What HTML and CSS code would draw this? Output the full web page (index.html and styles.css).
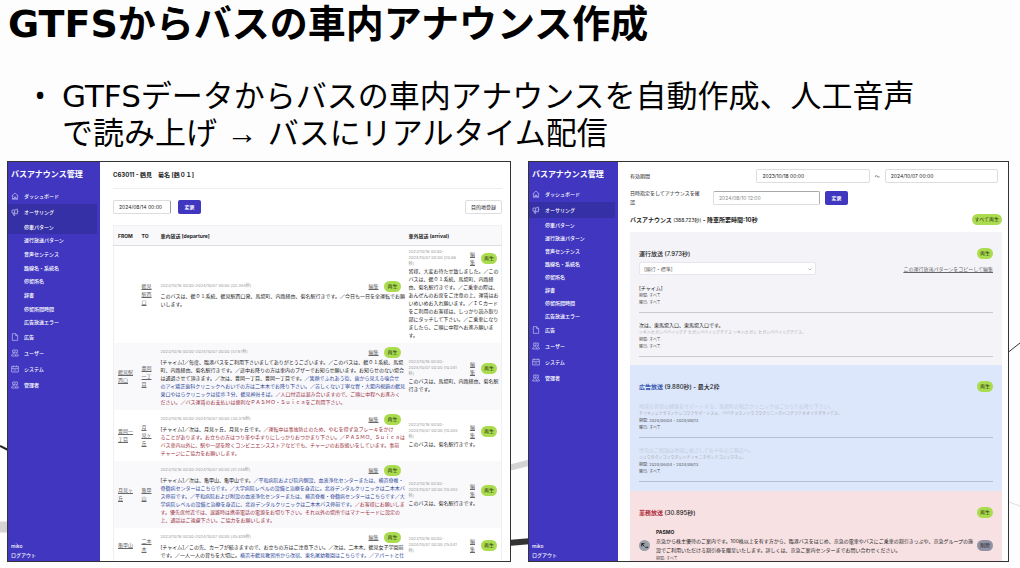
FILE: index.html
```html
<!DOCTYPE html>
<html lang="ja">
<head>
	<meta charset="utf-8">
	<title>GTFSからバスの車内アナウンス作成</title>
	<link rel="stylesheet" href="styles.css">
</head>
<body>
<svg class="defs" width="0" height="0" aria-hidden="true">
	<symbol id="home" viewBox="0 0 24 24"><path d="M2 12 12 3l10 9M5 10v11h5v-6h4v6h5V10M3 21h18"/></symbol>
	<symbol id="horn" viewBox="0 0 24 24"><path d="M3 6h8l8-3v15l-8-3H3zM11 6v9M6 15l2 7h4l-2-7M19 8c3 0 3 5 0 5"/></symbol>
	<symbol id="file" viewBox="0 0 24 24"><path d="M4 2h10l6 6v14H4zM14 2v6h6"/></symbol>
	<symbol id="users" viewBox="0 0 24 24"><path d="M5 3h7v8H5zM13 3h6v8h-5M2 21c0-9 13-9 13 0zM15 14c5 0 7 3 7 7h-7"/></symbol>
	<symbol id="system" viewBox="0 0 24 24"><path d="M2 4h20v17H2zM2 10h20M7 2v4M17 2v4M7 15h9"/></symbol>
</svg>
<svg class="lines" viewBox="0 0 1020 568" preserveAspectRatio="none" aria-hidden="true">
	<path d="M0 446 10 451" stroke="#222" stroke-width="2"/>
	<path d="M0 527H10" stroke="#d4d4d4" stroke-width="11"/>
	<path d="M508 468 532 462" stroke="#d4d4d4" stroke-width="6"/>
	<path d="M508 543 532 541" stroke="#333" stroke-width="6"/>
	<path d="M1006 354 1020 343" stroke="#333" stroke-width="1"/>
	<path d="M1006 501 1020 506" stroke="#ddd" stroke-width="1"/>
</svg>

<h1>GTFSからバスの車内アナウンス作成</h1>
<ul class="lead">
	<li>GTFSデータからバスの車内アナウンスを自動作成、人工音声<br>で読み上げ <span class="arrow">→</span> バスにリアルタイム配信</li>
</ul>

<main class="shots">
<section class="shot shot-a">
	<nav class="side">
		<h2>バスアナウンス管理</h2>
		<a href="#"><svg><use href="#home"/></svg>ダッシュボード</a>
		<a href="#" class="on"><svg><use href="#horn"/></svg>オーサリング</a>
		<div class="sub">
			<a href="#" class="on">停車パターン</a>
			<a href="#">運行放送パターン</a>
			<a href="#">音声センテンス</a>
			<a href="#">路線名・系統名</a>
			<a href="#">停留所名</a>
			<a href="#">辞書</a>
			<a href="#">停留所間時間</a>
			<a href="#">広告放送エラー</a>
		</div>
		<a href="#"><svg><use href="#file"/></svg>広告</a>
		<a href="#"><svg><use href="#users"/></svg>ユーザー</a>
		<a href="#"><svg><use href="#system"/></svg>システム</a>
		<a href="#"><svg><use href="#users"/></svg>管理者</a>
		<div class="account"><span>miko</span><a href="#">ログアウト</a></div>
	</nav>
	<div class="content">
		<h3>C63011 - 鶴見　菊名 [鶴０１]</h3>
		<form class="bar">
			<input type="text" class="date" value="2024/08/14 00:00" aria-label="日時">
			<button type="button" class="primary">変更</button>
			<button type="button" class="plain">目的地登録</button>
		</form>
		<table>
			<colgroup><col class="c-from"><col class="c-to"><col><col class="c-arr"></colgroup>
			<thead>
				<tr><th>FROM</th><th>TO</th><th>車内放送 [departure]</th><th>車外放送 (arrival)</th></tr>
			</thead>
			<tbody>
				<tr>
					<td></td>
					<td><a href="#">鶴見<br>駅西<br>口</a></td>
					<td>
						<div class="meta"><span>2023/10/18 00:00-2024/10/07 00:00 (02.364秒)</span><a href="#">編集</a><button class="play">再生</button></div>
						<p>このバスは、鶴０１系統、鶴見駅西口発、馬場町、内路経由、菊名駅行きです。／今日も一日を全運転でお願<br>いします。</p>
					</td>
					<td>
						<div class="meta"><span>2023/10/18 00:00-<br>2024/10/07 00:00 (20.88<br>秒)</span><a href="#">編<br>集</a><button class="play">再生</button></div>
						<p>皆様、大変お待たせ致しました。／この<br>バスは、鶴０１系統、馬場町、内路経<br>由、菊名駅行きです。／ご乗車の際は、<br>あんぜんのお席をご注意の上、運賃はお<br>いめいめお入れ願います。／ＩＣカード<br>をご利用のお客様は、しっかり読み取り<br>部にタッチして下さい。／ご乗車になり<br>ましたら、ご順に中程へお進み願いま<br>す。</p>
					</td>
				</tr>
				<tr>
					<td><a href="#">鶴見駅<br>西口</a></td>
					<td><a href="#">豊岡<br>一丁<br>目</a></td>
					<td>
						<div class="meta"><span>2023/10/18 00:00-2024/10/07 00:00 (57.97秒)</span><a href="#">編集</a><button class="play">再生</button></div>
						<p>[チャイム]／毎度、臨港バスをご利用下さいましてありがとうございます。／このバスは、鶴０１系統、馬場<br>町、内路経由、菊名駅行きです。／途中お降りの方は車内のブザーでお知らせ願います。お知らせのない場合<br>は通過させて頂きます。／次は、豊岡一丁目、豊岡一丁目です。<span class="ad">／笑顔でふれあう街、歯から見える噛合せ<br>のアイ矯正歯科クリニックへおいでの方は二本木でお降り下さい。／苦しくない丁寧な胃・大腸内視鏡の鶴見<br>東口やはらクリニックは徒歩３分、鶴見神社そば。</span><span class="biz">／人口付近は混み合いますので、ご順に中程へお進みく<br>ださい。／バス運賃のお支払いは便利なＰＡＳＭＯ・Ｓｕｉｃａをご利用下さい。</span></p>
					</td>
					<td>
						<div class="meta"><span>2023/10/18 00:00-<br>2024/10/07 00:00 (10.041<br>秒)</span><a href="#">編<br>集</a><button class="play">再生</button></div>
						<p>このバスは、馬場町、内路経由、菊名駅<br>行きです。</p>
					</td>
				</tr>
				<tr>
					<td><a href="#">豊岡一<br>丁目</a></td>
					<td><a href="#">月<br>見ヶ<br>丘</a></td>
					<td>
						<div class="meta"><span>2023/10/18 00:00-2024/10/07 00:00 (30.379秒)</span><a href="#">編集</a><button class="play">再生</button></div>
						<p>[チャイム]／次は、月見ヶ丘、月見ヶ丘です。<span class="biz">／運転中は事故防止のため、やむを得ず急ブレーキをかけ<br>ることがあります。お立ちの方はつり革や手すりにしっかりおつかまり下さい。／ＰＡＳＭＯ、Ｓｕｉｃａは<br>バス車内以外に、駅や一部を除くコンビニエンスストアなどでも、チャージのお取扱いをしています。事前<br>チャージにご協力をお願いします。</span></p>
					</td>
					<td>
						<div class="meta"><span>2023/10/18 00:00-<br>2024/10/07 00:00 (10.062<br>秒)</span><a href="#">編<br>集</a><button class="play">再生</button></div>
						<p>このバスは、菊名駅行きです。</p>
					</td>
				</tr>
				<tr>
					<td><a href="#">月見ヶ<br>丘</a></td>
					<td><a href="#">亀甲<br>山</a></td>
					<td>
						<div class="meta"><span>2023/10/18 00:00-2024/10/07 00:00 (51.248秒)</span><a href="#">編集</a><button class="play">再生</button></div>
						<p>[チャイム]／次は、亀甲山、亀甲山です。<span class="ad">／平和病院および院内側設、血液浄化センターまたは、横浜脊椎・<br>骨髄病センターはこちらです。／大学病院レベルの設備と治療を身近に。北谷デンタルクリニックは二本木バ<br>ス停前です。／平和病院および附設の血液浄化センターまたは、横浜脊椎・脊髄病センターはこちらです／大<br>学病院レベルの設備と治療を身近に、北谷デンタルクリニックは二本木バス停前です。</span><span class="biz">／お客様にお願いしま<br>す。優先席付近では、混雑時は携帯電話の電源をお切り下さい。それ以外の場所ではマナーモードに設定の<br>上、通話はご遠慮下さい。ご協力をお願いします。</span></p>
					</td>
					<td>
						<div class="meta"><span>2023/10/18 00:00-<br>2024/10/07 00:00 (10.062<br>秒)</span><a href="#">編<br>集</a><button class="play">再生</button></div>
						<p>このバスは、菊名駅行きです。</p>
					</td>
				</tr>
				<tr>
					<td><a href="#">亀甲山</a></td>
					<td><a href="#">二本<br>木</a></td>
					<td>
						<div class="meta"><span>2023/10/18 00:00-2024/10/07 00:00 (45.829秒)</span><a href="#">編集</a><button class="play">再生</button></div>
						<p>[チャイム]／この先、カーブが続きますので、お立ちの方はご注意下さい。／次は、二本木、鶴見女子学園前<br>です。／一人一人の育ちを大切に。<span class="ad">横浜市鶴見教習所から改宿、東名尾幼稚園はこちらです。／アパートと仕</span></p>
					</td>
					<td>
						<div class="meta"><span>2023/10/18 00:00-<br>2024/10/07 00:00 (15.041<br>秒)</span><a href="#">編<br>集</a><button class="play">再生</button></div>
					</td>
				</tr>
			</tbody>
		</table>
	</div>
</section>

<section class="shot shot-b">
	<nav class="side">
		<h2>バスアナウンス管理</h2>
		<a href="#"><svg><use href="#home"/></svg>ダッシュボード</a>
		<a href="#" class="on"><svg><use href="#horn"/></svg>オーサリング</a>
		<div class="sub">
			<a href="#">停車パターン</a>
			<a href="#">運行放送パターン</a>
			<a href="#">音声センテンス</a>
			<a href="#">路線名・系統名</a>
			<a href="#">停留所名</a>
			<a href="#">辞書</a>
			<a href="#">停留所間時間</a>
			<a href="#">広告放送エラー</a>
		</div>
		<a href="#"><svg><use href="#file"/></svg>広告</a>
		<a href="#"><svg><use href="#users"/></svg>ユーザー</a>
		<a href="#"><svg><use href="#system"/></svg>システム</a>
		<a href="#"><svg><use href="#users"/></svg>管理者</a>
		<div class="account"><span>miko</span><a href="#">ログアウト</a></div>
	</nav>
	<div class="content">
		<form>
			<div class="period">
				<label for="from">有効期間</label>
				<input type="text" id="from" value="2023/10/18 00:00">
				<span>～</span>
				<input type="text" aria-label="終了" value="2024/10/07 00:00">
			</div>
			<div class="confirm">
				<label for="at">日時指定をしてアナウンスを確<br>認</label>
				<input type="text" id="at" class="date" value="2024/08/10 12:00">
				<button type="button" class="primary">変更</button>
			</div>
		</form>
		<div class="total">
			<h3>バスアナウンス <small>(388.723秒)</small> - 降車所要時間:10秒</h3>
			<button class="play">すべて再生</button>
		</div>
		<div class="card route">
			<div class="head"><h4>運行放送 (7.973秒)</h4><button class="play">再生</button></div>
			<div class="pick">
				<span class="select">
					<select aria-label="運行放送パターン"><option>[順行・標準]</option></select>
					<svg viewBox="0 0 8 8"><path d="M1 3l3 3 3-3"/></svg>
				</span>
				<a href="#">この運行放送パターンをコピーして編集</a>
			</div>
			<div class="item"><p>[チャイム]</p><small>期間: すべて<br>曜日: すべて</small></div>
			<div class="item"><p>次は、東馬場入口、東馬場入口です。</p><small><i>ツギハヒガシババイリグチ ヒガシババイリグチデス ツギハヒガシ ヒガシババイリグチデス。</i>期間: すべて<br>曜日: すべて</small></div>
		</div>
		<div class="card advert">
			<div class="head"><h4><b>広告放送</b> (9.880秒) - 最大2枠</h4><button class="play">再生</button></div>
			<div class="item"><p>地域の皆様の健康をサポートする、馬場町の総合クリニックはこちらでお降り下さい。</p><small><i>チイキノミナサマノケンコウヲサポートスル、ババチョウノソウゴウクリニックハコチラデオオリクダサイデス。</i>期間: 2024/06/04 - 2024/09/13<br>曜日: すべて</small></div>
			<div class="item"><p>住宅のご相談は地域に根ざして五十年の工務店へ。</p><small><i>ジュウタクノゴソウダンハチイキニネザシテゴジュウネン。</i>期間: 2024/06/04 - 2024/09/13<br>曜日: すべて</small></div>
		</div>
		<div class="card work">
			<div class="head"><h4><b>業務放送</b> (30.895秒)</h4><button class="play">再生</button></div>
			<div class="notice">
				<button class="move" aria-label="並べ替え"><svg viewBox="0 0 12 12"><path d="M3 4l3 3M3 4h3M3 4v3M7 8h3"/></svg></button>
				<div><p><b>PASMO</b><br>京急から株主優待のご案内です。100株以上を有す方から、臨港バスをはじめ、京急の電車やバスにご乗車の割引きっぷや、京急グループの施<br>設でご利用いただける割引券を贈呈いたします。詳しくは、京急ご案内センターまでお問い合わせください。</p><small>期間: すべて</small></div>
				<button class="play off">削除</button>
			</div>
		</div>
	</div>
</section>
</main>
</body>
</html>
```

FILE: styles.css
```css
* {
	box-sizing: border-box;
}
body {
	margin: 0;
	height: 100vh;
	display: flex;
	flex-direction: column;
	overflow: hidden;
	background: #fdfdfd;
	color: #000;
	font-family: "DejaVu Sans", "Noto Sans CJK JP", sans-serif;
}
h1, h2, h3, h4, p, ul {
	margin: 0;
}
.defs, .lines {
	position: absolute;
}
.lines {
	inset: 0;
	width: 100%;
	height: 100%;
	z-index: -1;
}
h1 {
	padding-left: 8px;
	font-size: 38px;
	line-height: 48px;
	white-space: nowrap;
}
.lead {
	padding: 29px 0 9px 62px;
	font-size: 31px;
	line-height: 37px;
	list-style-type: "•  ";
	white-space: nowrap;
}
.lead li::marker {
	font-family: "Open Sans", sans-serif;
}
.arrow {
	font-family: "Liberation Sans", sans-serif;
}

/* two screens side by side */
.shots {
	flex: 1;
	min-height: 0;
	display: grid;
	grid-template-columns: 504fr 481fr;
	grid-template-rows: minmax(0, 1fr);
	gap: 17px;
	padding: 0 11px 6px 7px;
}
.shot {
	display: flex;
	overflow: hidden;
	min-width: 0;
	background: #fff;
	border: 1px solid #333;
	font-family: Inter, "Noto Sans CJK JP", sans-serif;
	font-size: 5px;
	line-height: 8px;
	color: #222;
}
.shot a {
	color: #666;
}
.shot input, .shot select, .shot button {
	margin: 0;
	font: inherit;
	color: inherit;
}

.side {
	flex: none;
	width: 92px;
	display: flex;
	flex-direction: column;
	background: #4036c0;
	color: #fff;
	font-weight: 500;
}
.shot-b .side {
	width: 89px;
}
.side h2 {
	padding: 7px 3px 8px;
	font-size: 8px;
	line-height: 11px;
}
.shot-b .side h2 {
	padding: 7px 3px 6px;
}
.side a {
	display: flex;
	align-items: center;
	gap: 5px;
	height: 16px;
	margin-right: 3px;
	padding-left: 3px;
	color: #fff;
	text-decoration: none;
}
.side svg {
	width: 8px;
	height: 8px;
	fill: none;
	stroke: #c9c5f5;
	stroke-width: 2;
}
.side a.on {
	background: #3630a6;
}
.sub {
	display: grid;
	grid-auto-rows: 1fr;
	height: 109px;
}
.shot-b .sub {
	height: 104px;
}
.sub a {
	height: auto;
	padding-left: 16px;
}
.account {
	margin-top: auto;
	padding: 0 3px 2px;
}
.account a {
	height: 9px;
	padding: 0;
}

.content {
	flex: 1;
	min-width: 0;
	padding: 0 8px 0 13px;
}
.shot-a h3 {
	padding: 7px 0;
	border-bottom: 1px solid #eee;
	font-size: 6px;
	line-height: 12px;
}
.bar {
	display: flex;
	gap: 7px;
	padding: 11px 0;
}
.shot input {
	height: 14px;
	min-width: 0;
	padding: 0 5px;
	border: 1px solid #ddd;
	border-radius: 2px;
	background: #fff;
}
.bar .date {
	width: 58px;
	border-right-color: #999;
}
.primary, .plain {
	height: 14px;
	padding: 0 5px;
	border: 0;
	border-radius: 2px;
}
.shot .primary {
	width: 23px;
	background: #4036c0;
	color: #fff;
	font-weight: 700;
}
.shot .plain {
	margin-left: auto;
	border: 1px solid #ddd;
	background: #fff;
}

table {
	width: 100%;
	table-layout: fixed;
	border-collapse: collapse;
	border: 1px solid #f0f0f4;
}
.c-from {
	width: 24px;
}
.c-to {
	width: 19px;
}
.c-arr {
	width: 97px;
}
th {
	height: 20px;
	padding: 0 4px;
	background: #f9f9fb;
	border-bottom: 1px solid #ddd;
	text-align: left;
	white-space: nowrap;
}
td {
	padding: 3px 4px 4px;
	white-space: nowrap;
}
tbody tr:nth-child(even) {
	background: #f9f9fc;
}
.meta {
	display: flex;
	align-items: center;
	gap: 6px;
	min-height: 12px;
	color: #999;
}
.meta span {
	flex: 1;
	font-size: 4px;
	line-height: 6px;
}
.ad {
	color: #2b4598;
}
.biz {
	color: #9c2f3c;
}
.shot .play {
	height: 11px;
	padding: 0 3px;
	border: 0;
	border-radius: 6px;
	background: #abdc50;
	color: #26330c;
	line-height: 11px;
	white-space: nowrap;
}
.shot .play.off {
	background: #9292a5;
	color: #222;
}

.shot-b .content {
	padding: 7px 6px 0 12px;
}
.period, .confirm {
	display: flex;
	align-items: center;
	gap: 5px;
	padding-right: 4px;
}
.period label {
	width: 33%;
}
.period input {
	flex: 1;
}
.confirm {
	padding-top: 6px;
}
.confirm label {
	width: 78px;
	line-height: 9px;
}
.confirm .date {
	width: 107px;
	border-color: #aaa #aaa #ddd #ddd;
	color: #888;
}
.total, .head {
	display: flex;
	align-items: center;
	justify-content: space-between;
}
.total {
	padding: 7px 0;
}
.total h3 {
	font-size: 6px;
}
.total small {
	font-size: 5px;
	font-weight: 400;
}
.card {
	padding: 16px 9px 9px;
}
.head h4 {
	font-size: 6px;
	font-weight: 500;
}
.card.route {
	padding-bottom: 8px;
	background: #f4f4f8;
}
.advert {
	background: #dce7fc;
}
.advert b {
	color: #3858b0;
}
.work {
	background: #f8e1e2;
}
.work h4 b {
	color: #b03040;
}
.pick {
	display: flex;
	align-items: center;
	justify-content: space-between;
	padding: 3px 0 9px;
}
.select {
	display: grid;
	align-items: center;
	width: 50%;
}
.select > * {
	grid-area: 1 / 1;
}
.select select {
	appearance: none;
	height: 13px;
	padding: 0 4px;
	border: 1px solid #e6e6ee;
	border-radius: 2px;
	background: #fff;
	color: #666;
}
.select svg {
	justify-self: end;
	width: 4px;
	height: 4px;
	margin-right: 4px;
	fill: none;
	stroke: #777;
}
.item {
	padding-bottom: 6px;
	border-bottom: 1px solid #c9c9d0;
	white-space: nowrap;
}
.item + .item {
	padding-top: 8px;
}
.item small, .notice small {
	display: block;
	font-size: 4px;
	line-height: 7px;
	color: #555;
}
.item i {
	display: block;
	font-style: normal;
	color: #aaa;
}
.advert .item {
	border-color: #b4bfd4;
}
.advert .item p {
	color: #c3cde0;
}
.advert .head {
	padding-bottom: 10px;
}
.work .head {
	padding-bottom: 10px;
}
.notice {
	display: flex;
	align-items: center;
	gap: 6px;
	white-space: nowrap;
}
.notice p {
	line-height: 9px;
}
.notice button {
	flex: none;
}
.notice div {
	flex: 1;
	min-width: 0;
}
.shot .move {
	width: 11px;
	height: 11px;
	padding: 0;
	border: 0;
	border-radius: 50%;
	background: #9aa0aa;
}
.move svg {
	display: block;
	fill: none;
	stroke: #111;
}
```
